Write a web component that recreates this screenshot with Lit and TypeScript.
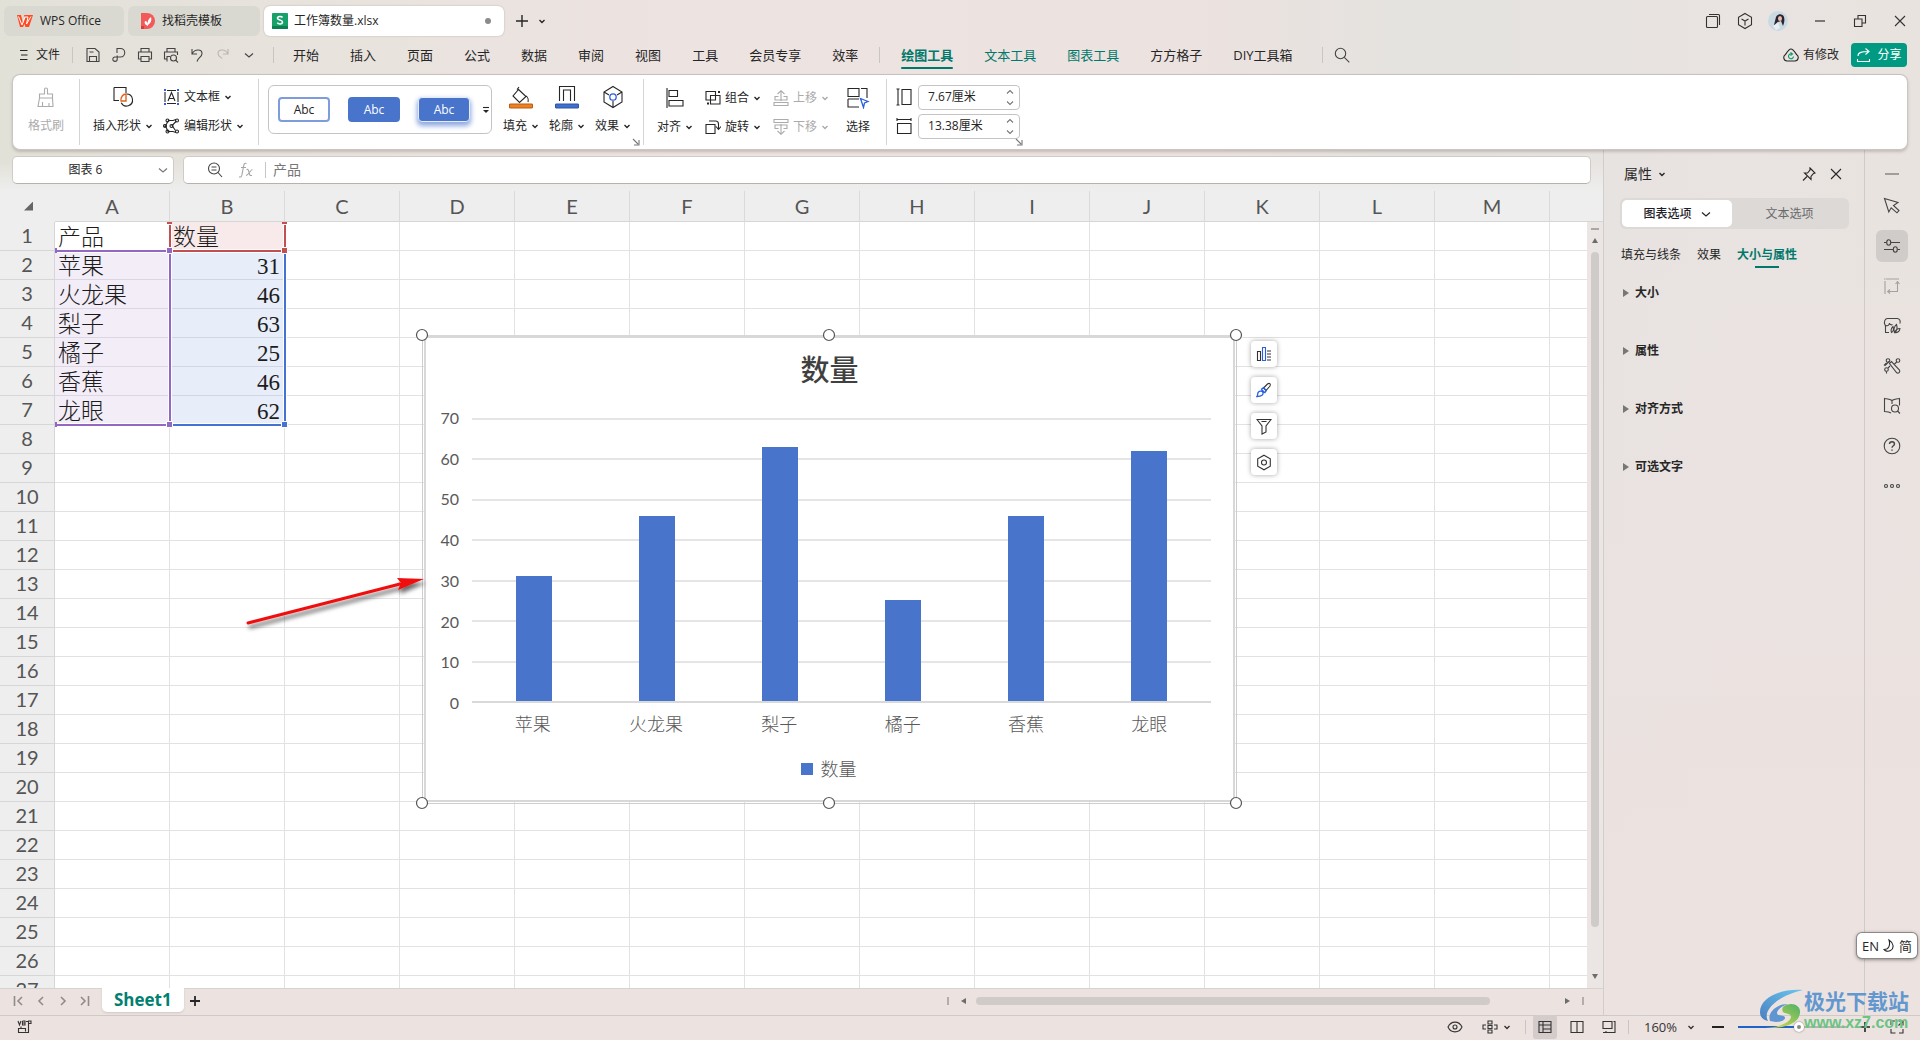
import { LitElement, html, css, svg, nothing, TemplateResult } from "lit";
import { customElement, property } from "lit/decorators.js";
import { classMap } from "lit/directives/class-map.js";
import { styleMap } from "lit/directives/style-map.js";

type Glyph = [number, number, TemplateResult];

const ICONS: Record<string, Glyph> = {
  wps: [18, 14, svg`<path d="M1 1h4l2 8 2-5-1-3h9l-4 12H9.500L8.500 10l-1.500 3H4z" fill="#ff4a24" stroke="none"/><path d="M2.500 2.500L6 11l3-8h3l-1.500 7L15 2.500" stroke="#fff" stroke-width="1"/>`],
  docer: [16, 16, svg`<path d="M1 0h6a8 8 0 0 1 0 16H1z" fill="#f25a5a" stroke="none"/><path d="M1 13h3v3H1z" fill="#d93b3b" stroke="none"/><path d="M8 13c-3-1-4-3-3-5 2 0 3 2 3 5zM8 12c-1-3 0-6 3-8 1 3 0 6-3 8z" fill="#fff" stroke="none"/>`],
  sheet: [16, 16, svg`<rect width="16" height="16" rx="1" fill="#16a06a" stroke="none"/><path d="M0 13h16v2a1 1 0 0 1-1 1H1a1 1 0 0 1-1-1z" fill="#0b7f50" stroke="none"/><path d="M10.500 4.500C9.500 3 5.500 3 5.500 5.300c0 2.200 5 1.400 5 3.800 0 2.400-4.200 2.300-5.200.6" stroke="#fff" stroke-width="1.600"/>`],
  plus: [14, 14, svg`<path d="M7 1v12M1 7h12" stroke-width="1.400"/>`],
  caret: [8, 8, svg`<path d="M1.500 3L4 5.500 6.500 3" stroke-width="1.400"/>`],
  chev: [10, 10, svg`<path d="M1 3.500l4 3.500 4-3.500"/>`],
  chevUp: [8, 6, svg`<path d="M1 4.500l3-3 3 3"/>`],
  chevDown: [8, 6, svg`<path d="M1 1.500l3 3 3-3"/>`],
  burger: [10, 12, svg`<path d="M1 1.500h7.500M2 6h6.500M1 10.500h7.500"/>`],
  save: [16, 16, svg`<path d="M2 1.500h8L14 5v9.500H2zM4.500 14.500v-5h7v5M4.500 5h4"/>`],
  pdf: [16, 16, svg`<path d="M6 6V1.500h3.500a4 4 0 0 1 0 8.500H4a2.200 2.200 0 1 0 2.200 2.200V8.500"/>`],
  print: [16, 16, svg`<path d="M4 5V1.500h8V5M3.500 12H1.500V5h13v7h-2M4 9.500h8v5H4z"/>`],
  preview: [16, 16, svg`<path d="M4 5V1.500h8V5M3.500 12H1.500V5h13v3M4 14.500V9.500h3"/><circle cx="10.500" cy="11" r="3"/><path d="M12.700 13.200L15 15.500"/>`],
  undo: [14, 16, svg`<path d="M2 2v5h5M2.300 6.500C5 1.500 12 2 12 6.500c0 3.500-4 4-5 8"/>`],
  redo: [14, 16, svg`<path d="M12 2v5H7M11.700 6.500C9 1.500 2 2 2 6.500c0 3 3 3.500 4 5"/>`],
  search: [16, 16, svg`<circle cx="6.500" cy="6.500" r="5.200"/><path d="M10.300 10.300l5 5"/>`],
  cloud: [16, 14, svg`<path d="M4 13a3.500 3.500 0 0 1-1.500-6.500C3.500 5 6 1 8 1s4.500 4 5.500 5.500A3.500 3.500 0 0 1 12 13z"/><path d="M7.500 4.500l2 1.500-2 1.500M9 6a2.500 2.500 0 1 0 1.500 2.500" stroke="#0a9a6c"/>`],
  share: [16, 16, svg`<path d="M2 9C2 5 6 4.500 12 4.500M9.500 1.500l3.500 3-3.500 3M1.500 12v2.500h12V12"/>`],
  pages: [16, 16, svg`<rect x="1.500" y="3.500" width="11" height="11" rx="1"/><path d="M4 1.500h9.500a1 1 0 0 1 1 1V12"/>`],
  cube: [16, 18, svg`<path d="M8 1.500l6.500 3.700v7.600L8 16.500l-6.500-3.700V5.200zM4.500 7L8 9l3.500-2M8 9v4.500"/>`],
  min: [12, 12, svg`<path d="M1 6h10" stroke-width="1.200"/>`],
  restore: [14, 14, svg`<path d="M1.500 5h7.500v7.500H1.500zM5 5V1.500h7.500V9H9"/>`],
  close: [12, 12, svg`<path d="M1 1l10 10M11 1L1 11"/>`],
  painter: [22, 22, svg`<path d="M9.500 8V3.500a1.500 1.500 0 0 1 3 0V8h5v4h-13V8zM4.500 12L3 20.500h15l-.5-8.500M7.500 20v-4M14 20v-3"/>`],
  shapes: [22, 22, svg`<path d="M2 1.500h12V7M7 14.500H2v-13"/><path d="M14.500 8a6 6 0 1 1-5.300 8.800"/><path d="M9 15c-.5-4 2-7 5-7v7z" stroke="#e0631d" stroke-width="1.400"/>`],
  textbox: [17, 16, svg`<path d="M2 3v10M15 3v10M4 1.500h9M4 14.500h9"/><path d="M5 12l3.500-8.500L12 12M6.300 9.500h4.500"/><g fill="#2b5fe0" stroke="none"><path d="M1 0h2v2H1zM14 0h2v2h-2zM1 14h2v2H1zM14 14h2v2h-2z"/></g>`],
  editshape: [17, 16, svg`<path d="M5 2.500h5l3-1M5 3L2.500 8 5 13.500h5l3 1M13.500 3L9 7.500l3.500 5M3.500 9L1 8"/><circle cx="14" cy="2.500" r="1.500"/><circle cx="4.500" cy="2.500" r="1.500"/><circle cx="2" cy="8" r="1.500"/><circle cx="8.500" cy="8" r="1.500"/><circle cx="4.500" cy="13.500" r="1.500"/><circle cx="14" cy="13.500" r="1.500"/>`],
  more: [8, 8, svg`<path d="M1 1.500h6"/><path d="M1 4h6L4 7z" fill="currentColor" stroke="none"/>`],
  fill: [24, 24, svg`<path d="M10 2l-2 2.500M9 4l8 7.500-6.500 6L4 11l5.500-6.500M17 11c2 1 2.500 4 2 6"/><rect x="0.500" y="19" width="23" height="4" rx="1" fill="#ee8023" stroke="#b85f12"/>`],
  outline: [24, 24, svg`<path d="M4.500 16V1.500h15V16M8.500 16V5h7v11"/><rect x="0.500" y="19" width="23" height="4" rx="1" fill="#3f6fce" stroke="#2c54a4"/>`],
  effect: [22, 24, svg`<path d="M11 1.500l9 5.500v10l-9 5.500L2 17V7zM2 7l5 3M20 7l-5 3M11 22v-6"/><circle cx="11" cy="12" r="3.200" stroke="#2b5fe0" stroke-width="1.300"/>`],
  corner: [8, 8, svg`<path d="M1 1l5 5M7 2v5H2"/>`],
  align: [20, 20, svg`<path d="M2 0v20M4 2.500h8.500v6H4zM4 12.500h14v5.500H4z"/>`],
  group: [16, 16, svg`<path d="M1 1.500h9.500V10H1zM5.500 5.500H15V14H5.500z"/><path d="M14 1v2M2 13.500h2" stroke-width="2"/>`],
  rotate: [16, 16, svg`<path d="M1 5.500h9v9H1zM4 2h6.500c2 0 3 1 3 3v5M11 7.500l2.500 3 2.500-3"/>`],
  up: [16, 16, svg`<path d="M8 11V1M4.500 4L8 .7 11.500 4M5.500 6.500H2v3.500h12V6.500h-3.500M1 12.500h14v3H1z"/>`],
  down: [16, 16, svg`<path d="M8 5v10M4.500 12L8 15.300 11.500 12M5.500 9.500H2V6h12v3.500h-3.500M1 .5h14v3H1z"/>`],
  select: [24, 22, svg`<path d="M2 1.500h11v8H2zM15 1.500h6V11M2 12v8h11M2 12h11"/><path d="M14.500 11.500l7.500 3-3.500 1.500-1 4.500z" stroke="#2b5fe0" stroke-width="1.300"/>`],
  height: [16, 18, svg`<path d="M2 1v16M.5 1h3M.5 17h3M6 1.500h9v15H6z"/>`],
  width: [16, 18, svg`<path d="M1 2.500h14M1 1v3M15 1v3M1.500 6.500h13.500v10H1.500z"/>`],
  zoomout: [16, 16, svg`<circle cx="7" cy="6.500" r="5.500"/><path d="M11 10.500l4 4.500M4.500 5h5M4.500 8h5"/>`],
  fx: [16, 16, svg`<path d="M8.500 1.500C6.500.5 6 2 5.500 4.500l-1.500 8C3.700 14.500 3 15.500 1 14.800M3 5.500h5M8.500 7.500c2-.8 2 1 2.800 4 .5 2 1 2.500 2.700 1.700M14.500 7.500c-2 0-3.500 5.500-6.500 6"/>`],
  pin: [14, 14, svg`<path d="M8 1l5 5-1.500.5-2.500 3v3L2.500 6h3L8 3zM5 9.500L1 13.500"/>`],
  elements: [16, 16, svg`<path d="M1.500 5.500h3v9h-3z"/><path d="M6.500 1.500h3v13h-3z" stroke="#2b5fe0"/><path d="M11 5h4M11 8h4M11 11h4M11 14h4"/>`],
  brush: [16, 16, svg`<path d="M7.500 6l4-4c2-1.500 3.500 0 2.500 2L10 8.500z"/><path d="M5 7.500l2.500-1.800L10.300 8.500 8.500 11M1 14.500c1-1 0-3 1.500-4.500s3.500-1 4.500.5c.5 2-1 4-6 4zM5.500 7.500l3 3" stroke="#2b5fe0" stroke-width="1.300"/>`],
  funnel: [16, 17, svg`<path d="M1 1.500h14L10 8v6l-4 2V8zM5.500 3.500h5"/>`],
  gear: [16, 17, svg`<path d="M8 1.200l6.300 3.600v7.400L8 15.800l-6.300-3.600V4.800z"/><circle cx="8" cy="8.500" r="2.500"/>`],
  dash: [14, 4, svg`<path d="M0 2h14" stroke="#8f8b89" stroke-width="1.600"/>`],
  cursor: [18, 18, svg`<path d="M1.500 1.500L15 5.500l-4.500 3 5.500 5-2 2.300-5.800-5L5.800 15z"/>`],
  sliders: [18, 16, svg`<path d="M1 4.500h2.500M8 4.500h9M1 11.500h9M14.500 11.500H17"/><ellipse cx="5.700" cy="4.500" rx="2" ry="2.700"/><ellipse cx="12.300" cy="11.500" rx="2" ry="2.700"/>`],
  transpose: [18, 18, svg`<path d="M3 2h13M2 4v13M1 2h1.500M14.500 5v9.500H5M12.500 7l2-2.300 2 2.300M7 12.500l-2.300 2L7 16.500"/>`],
  store: [18, 18, svg`<path d="M2.500 8.500v7H6M2 8C.5 5 2 1.500 4.500 1.500h10C17 2 17.500 4 17 6.500M2 8c2 1.500 4.500.5 4.500-2 0 1.500 1.500 2.300 3 1.500"/><path d="M8.500 15.500c-1-2 0-5 1.500-6 .8 2.500.5 5-1.500 6zM11.500 15.500c-1-3 0-6.500 2-8 1 3 .5 6.500-2 8zM11.500 15.500c1-2.500 3-4 5.500-4-.3 2.800-2.500 4.500-5.500 4z"/>`],
  tools: [18, 18, svg`<path d="M6.500 6.500l2-2 8 8.500c1 2-1 3.800-2.800 2.800zM6 4.500l-4 4"/><circle cx="5" cy="3.500" r="1.800"/><circle cx="15" cy="3.500" r="1.800"/><circle cx="3.500" cy="12.500" r="1.800"/><path d="M11.500 7L13.700 5M5 11l2-2M3.500 14.500v2M1 8.500L3.500 6"/>`],
  book: [18, 18, svg`<path d="M9 3.500C7 2 4 2 1.500 1.500v13c3 .2 5 .5 6.500 1.500M9 3.500c2-1.500 5-1.500 7.500-2v7M9 3.500V7"/><circle cx="12" cy="11.500" r="3.500"/><path d="M14.500 14l2.500 2.500"/>`],
  help: [18, 18, svg`<circle cx="9" cy="9" r="7.800"/><path d="M6.500 7c0-3 5-3 5 0 0 1.800-2.500 1.700-2.500 3.800M9 12.500v1.300" stroke-width="1.400"/>`],
  dots: [18, 6, svg`<circle cx="3" cy="3" r="1.500"/><circle cx="9" cy="3" r="1.500"/><circle cx="15" cy="3" r="1.500"/>`],
  first: [12, 10, svg`<path d="M1.500 0v10M9 1L5 5l4 4" stroke-width="1.600"/>`],
  prev: [12, 10, svg`<path d="M8 1L4 5l4 4" stroke-width="1.600"/>`],
  next: [12, 10, svg`<path d="M4 1l4 4-4 4" stroke-width="1.600"/>`],
  last: [12, 10, svg`<path d="M2 1l4 4-4 4M9.500 0v10" stroke-width="1.600"/>`],
  vbt: [16, 14, svg`<path d="M1 1l1.500 4L4 1M5.500 1v4H8V3H5.500M5.500 1H8v2M9 1.500h2M11.500 5V1H14v2.500h-2M11.500 3v9.500H1.500v-4h7v3M4 8V6.500"/>`],
  eye: [16, 12, svg`<path d="M1 6c3-6.500 11-6.500 14 0-3 6.500-11 6.500-14 0z"/><circle cx="8" cy="6" r="2"/>`],
  cross: [16, 14, svg`<path d="M6 1h4v3H6zM6 10h4v3H6zM4 5H1v4h3M12 5h3v4h-3M6 5.500h4v3H6z"/>`],
  normal: [14, 14, svg`<path d="M1 1.500h12v11H1zM1 5h12M5 1.500v11M5 9h8"/>`],
  layout: [14, 14, svg`<path d="M1 1.500h12v11H1zM7 1.500v11"/>`],
  pagebreak: [14, 14, svg`<path d="M1 1.500h9v7H1zM1 12.500h12v-11h-1.500M4 12V11"/>`],
  full: [14, 14, svg`<path d="M1 5V1h4M9 13h4V9M8.500 1H13v4.500M13 1L8.500 5.500M1 9v4h4.500"/>`],
  moon: [12, 14, svg`<path d="M6 1c4 2.500 6 8 1.500 10.500C5 13 2 12 1 10.500 6 10.500 7.500 6 6 1z"/>`],
};

@customElement("x-icon")
export class XIcon extends LitElement {
  static styles = css`
    :host { display: inline-flex; flex: none; }
    svg { display: block; fill: none; stroke: currentColor; stroke-width: 1.100; }
  `;
  @property() name = "";
  render() {
    const g = ICONS[this.name];
    if (!g) return nothing;
    return html`<svg width=${g[0]} height=${g[1]} viewBox="0 0 ${g[0]} ${g[1]}" aria-hidden="true">${g[2]}</svg>`;
  }
}

const ic = (name: string) => html`<x-icon name=${name}></x-icon>`;

const DATA: [string, number][] = [
  ["苹果", 31], ["火龙果", 46], ["梨子", 63], ["橘子", 25], ["香蕉", 46], ["龙眼", 62],
];

@customElement("column-chart")
export class ColumnChart extends LitElement {
  static styles = css`
    :host {
      display: flex; flex-direction: column; box-sizing: border-box; background: #fff;
      border: 2px solid #d8d8d8; border-top-width: 3px; padding: 12px 22px 0 12px;
      font-family: Lato, "Noto Sans CJK SC", sans-serif; color: #595959;
    }
    .title { margin: 0 0 0 10px; font-size: 29px; line-height: 40px; font-weight: 500; text-align: center; color: #404040; }
    .body { display: flex; margin-top: 28px; height: 285px; }
    .axis { display: flex; flex-direction: column; justify-content: space-between; width: 21px; margin: -10px 13px -10px 0; text-align: right; font-size: 16px; line-height: 20px; }
    .plot { flex: 1; display: grid; }
    .lines, .bars { grid-area: 1 / 1; display: flex; }
    .lines { flex-direction: column; justify-content: space-between; }
    .line { height: 2px; background: #e5e5e5; }
    .line:last-child { background: #d9d9d9; }
    .bars { align-items: flex-end; padding: 1px 0 2px; }
    .slot { flex: 1; height: 100%; display: flex; align-items: flex-end; justify-content: center; }
    .bar { width: 36px; background: #4874cb; }
    .cats { display: flex; margin: 7px 0 0 33px; font-size: 18px; line-height: 28px; font-weight: 300; }
    .cats span { flex: 1; text-align: center; }
    .legend { display: flex; justify-content: center; align-items: center; gap: 8px; margin-top: 17px; padding-left: 8px; font-size: 18px; line-height: 28px; font-weight: 300; }
    .key { width: 12px; height: 12px; background: #4874cb; }
  `;
  render() {
    const ticks = [70, 60, 50, 40, 30, 20, 10, 0];
    return html`
      <h2 class="title">数量</h2>
      <div class="body">
        <div class="axis">${ticks.map((t) => html`<span>${t}</span>`)}</div>
        <div class="plot">
          <div class="lines">${ticks.map(() => html`<div class="line"></div>`)}</div>
          <div class="bars">
            ${DATA.map(([, v]) => html`<div class="slot"><div class="bar" style=${styleMap({ height: `${(v / 70) * 100}%` })}></div></div>`)}
          </div>
        </div>
      </div>
      <div class="cats">${DATA.map(([n]) => html`<span>${n}</span>`)}</div>
      <div class="legend"><span class="key"></span><span>数量</span></div>
    `;
  }
}

@customElement("sheet-grid")
export class SheetGrid extends LitElement {
  static styles = css`
    :host { display: block; position: relative; overflow: hidden; flex: 1; min-width: 0; background: #fff; }
    table { border-collapse: separate; border-spacing: 0; table-layout: fixed; width: 1665px; }
    th, td { box-sizing: border-box; padding: 0; overflow: hidden; white-space: nowrap; }
    thead th { height: 31px; border-right: 1px solid #dadada; border-bottom: 1px solid #d6d6d6; background: #eeeeee; }
    thead th.stub, tbody th { width: 55px; }
    thead th.stub { border-right-color: #eeeeee; border-bottom-color: #eeeeee; }
    thead th { font: 400 20px/28px Lato, "Noto Sans", sans-serif; color: #555; }
    tbody th { padding-bottom: 3px; font: 400 20px/24px Lato, "Noto Sans", sans-serif; color: #555; border-right: 1px solid #d6d6d6; border-bottom: 1px solid #d6d6d6; background: #eeeeee; }
    thead th.col { width: 115px; }
    td { height: 29px; border-right: 1px solid #e2e2e2; border-bottom: 1px solid #e2e2e2; font: 300 23px/24px "Liberation Serif", "Noto Sans CJK SC", serif; color: #1c1c1c; vertical-align: bottom; }
    td.txt { padding-left: 3px; }
    td.num { padding-right: 4px; text-align: right; }
    .purple { background: #f3edf8; border-color: #dbd6e2; }
    .red { background: #f8eaea; }
    .blue { background: #e8edfa; border-color: #d1d6e4; }
    .tri { display: block; width: 9px; height: 9px; margin-left: 24px; background: #666; clip-path: polygon(100% 0, 100% 100%, 0 100%); }
    .marks { position: absolute; left: 0; top: 0; pointer-events: none; }
    column-chart { position: absolute; left: 424px; top: 144px; width: 811px; height: 467px; }
    .frame { position: absolute; left: 422px; top: 144px; width: 813px; height: 467px; border: 1px solid #cdcdd2; }
    .tools { position: absolute; left: 1251px; top: 150px; display: flex; flex-direction: column; gap: 10px; }
    .tools button { display: flex; align-items: center; justify-content: center; width: 26px; height: 26px; padding: 0; border: 0; border-radius: 4px; background: #fff; color: #333; box-shadow: 0 0 5px rgba(0, 0, 0, 0.35); }
  `;
  private cell(r: number, c: number) {
    if (r === 1 && c === 0) return html`<td class="txt">产品</td>`;
    if (r === 1 && c === 1) return html`<td class="txt red">数量</td>`;
    if (r >= 2 && r <= 7 && c === 0) return html`<td class="txt purple">${DATA[r - 2][0]}</td>`;
    if (r >= 2 && r <= 7 && c === 1) return html`<td class="num blue">${DATA[r - 2][1]}</td>`;
    return html`<td></td>`;
  }
  render() {
    const cols = [..."ABCDEFGHIJKLM", ""];
    const rows = Array.from({ length: 27 }, (_, i) => i + 1);
    const knobs = [[422, 144], [829, 144], [1236, 144], [422, 612], [829, 612], [1236, 612]];
    return html`
      <table aria-label="Sheet1">
        <thead><tr><th class="stub"><span class="tri"></span></th>${cols.map((c) => html`<th class="col" scope="col">${c}</th>`)}</tr></thead>
        <tbody>${rows.map((r) => html`<tr><th scope="row">${r}</th>${cols.map((_, c) => this.cell(r, c))}</tr>`)}</tbody>
      </table>
      <div class="frame"></div>
      <column-chart></column-chart>
      <svg class="marks" width="1587" height="799" viewBox="0 0 1587 799" fill="none">
        <defs><filter id="sh" x="-10%" y="-30%" width="120%" height="180%"><feDropShadow dx="2" dy="4" stdDeviation="2" flood-color="#000" flood-opacity="0.600"/></filter></defs>
        <g stroke="#fff" stroke-width="4"><path d="M55 60H285M170 60V234M285 60V234M55 234H285M170 31V60M285 31V60"/></g>
        <path d="M171 234H285V60" stroke="#4672d2" stroke-width="2"/>
        <path d="M55 60H170V234H55" stroke="#9368c2" stroke-width="2"/>
        <path d="M170 34V60M285 34V60M172 60H285" stroke="#c44f50" stroke-width="2"/>
        <path d="M167 32h5M282 32h5" stroke="#c44f50" stroke-width="2"/>
        <g stroke="#fff">
          <path d="M166.500 56.500h6v6h-6zM166.500 230.500h6v6h-6z" fill="#9368c2"/>
          <path d="M281.500 56.500h6v6h-6z" fill="#c44f50"/><path d="M281.500 230.500h6v6h-6z" fill="#4672d2"/>
        </g>
        <path d="M55 57h2v5h-2zM55 231h2v5h-2z" fill="#9368c2"/>
        <g fill="#fff" stroke="#555" stroke-width="1.200">${knobs.map(([x, y]) => svg`<circle cx=${x} cy=${y} r="5.500"/>`)}</g>
        <g filter="url(#sh)"><path d="M248 432L400 393" stroke="#f00d0d" stroke-width="3" stroke-linecap="round"/><path d="M397 387L424 388L398 399L401 392z" fill="#f00d0d"/></g>
      </svg>
      <div class="tools">
        ${[["elements", "图表元素"], ["brush", "图表样式"], ["funnel", "图表筛选器"], ["gear", "设置图表区域格式"]].map(([n, t]) => html`<button aria-label=${t}>${ic(n)}</button>`)}
      </div>
    `;
  }
}

@customElement("app-root")
export class AppRoot extends LitElement {
  static styles = css`
    :host {
      display: flex; flex-direction: column; height: 100vh; position: relative; overflow: hidden; color: #262626;
      font: 400 12px/18px "Open Sans", "Noto Sans CJK SC", sans-serif;
      background: linear-gradient(180deg, rgba(236, 227, 225, 0) 20%, #ece2e0 90%), linear-gradient(90deg, #e2e1d8 0, #e9e3de 20%, #ede3e1 36%, #ece2e0 62%, #e4e3df 74%, #e9e3e1 90%, #e9e3e0 100%);
    }
    button, input { font: inherit; color: inherit; border: 0; background: none; margin: 0; padding: 0; }
    button { display: flex; align-items: center; white-space: nowrap; }
    .vsep { width: 1px; background: #c9c5c2; flex: none; }
    .grow { flex: 1; }

    .title { display: flex; align-items: center; height: 30px; padding: 6px 0 0 4px; flex: none; }
    .tab { height: 30px; box-sizing: border-box; border-radius: 6px; background: #dad9d1; padding-left: 12px; gap: 6px; margin-right: 4px; }
    .t1 { width: 120px; }
    .t2 { width: 132px; }
    .t3 { width: 240px; background: #fff; padding: 0 13px 0 8px; box-shadow: 0 0 2px #b5b0ac; margin-right: 11px; }
    .dot { width: 6px; height: 6px; border-radius: 3px; background: #8b8b8b; }
    .title .caret { margin-left: 9px; }
    .sys { display: flex; align-items: center; height: 26px; color: #333; }
    .sys button { justify-content: center; width: 32px; }
    .sys .w { width: 40px; }
    .avatar { width: 20px; height: 20px; margin: 0 12px 0 7px; }

    .menu { display: flex; align-items: center; height: 38px; padding: 0 13px 0 19px; flex: none; font-size: 13px; }
    .file { gap: 7px; font-size: 12px; margin-right: 12px; }
    .menu .vsep { height: 16px; }
    .quick { display: flex; margin: 0 11px 0 7px; color: #444; }
    .quick button { width: 26px; height: 22px; justify-content: center; }
    .quick .off { color: #b9b6b2; }
    .tabs { display: flex; gap: 31px; margin: 0 21px 0 19px; }
    .tabs.more { margin: 0 29px 0 21px; }
    .tabs button { height: 27px; position: relative; }
    .ctx { color: #00796b; }
    .on { font-weight: 700; color: #00796b; }
    .tabs .on::after { content: ""; position: absolute; left: 0; right: 0; bottom: 0; height: 2px; background: #00796b; border-radius: 1px; }
    .menu .find { margin-left: 11px; color: #444; }
    .mod { gap: 4px; font-size: 12px; margin-right: 12px; }
    .share { gap: 5px; width: 56px; height: 24px; justify-content: center; border-radius: 4px; background: #009a82; color: #fff; font-size: 12px; }

    .ribbon { display: flex; align-items: stretch; margin: 0 12px; height: 74px; border: 1px solid #cbc6c3; border-top-color: #c6c1be; border-radius: 8px; background: #fff; flex: none; box-shadow: 0 2px 3px rgba(90, 70, 60, 0.25); z-index: 1; }
    .grp { display: flex; align-items: center; position: relative; border-right: 1px solid #d5d5d5; margin: 4px 0; padding-bottom: 2px; }
    .grp:last-child { border-right: 0; }
    .big { display: grid; grid-template-rows: 29px 28px; justify-items: center; align-items: center; }
    .lab { display: flex; align-items: center; gap: 4px; }
    .pair { display: grid; grid-template-rows: 29px 28px; }
    .pair > button { gap: 4px; }
    .off { color: #ababab; }
    .g1 { width: 66px; justify-content: center; }
    .g2 { padding-left: 13px; gap: 10px; width: 165px; }
    .g3 { padding-left: 9px; width: 375px; gap: 10px; }
    .g4 { padding: 0 16px 0 13px; gap: 12px; }
    .g4 .sel { margin-left: 5px; }
    .g5 { padding-left: 9px; width: 130px; }
    .gallery { display: flex; align-items: center; box-sizing: border-box; width: 224px; height: 49px; padding-left: 9px; gap: 18px; border: 1px solid #c4c4c4; border-radius: 6px; margin: 0 1px 3px 0; }
    .sw { width: 52px; height: 25px; box-sizing: border-box; justify-content: center; border-radius: 4px; color: #fff; background: #4874cb; }
    .sw.line { background: #fff; color: #222; border: 2px solid #7e9cdc; }
    .sw.glow { box-shadow: 0 3px 5px 1px #8fa9e0; border: 1px solid #e4ebf9; }
    .gallery .caret { margin-left: -6px; }
    .corner { position: absolute; right: 3px; bottom: -1px; color: #777; }
    .size { display: flex; align-items: center; gap: 6px; height: 29px; }
    .spin { display: flex; align-items: center; box-sizing: border-box; width: 102px; height: 25px; border: 1px solid #c4c4c4; border-radius: 4px; padding: 0 5px 0 9px; }
    .spin input { width: 72px; flex: 1; }
    .ud { display: flex; flex-direction: column; gap: 5px; color: #777; }

    .main { display: flex; flex: 1; min-height: 0; }
    .work { display: flex; flex-direction: column; flex: 1; min-width: 0; }
    .fbar { display: flex; gap: 9px; padding: 6px 12px 7px; height: 28px; flex: none; background: linear-gradient(180deg, rgba(238, 238, 238, 0) 30%, #eeeeee); }
    .box { display: flex; align-items: center; box-sizing: border-box; height: 28px; background: #fff; border: 1px solid #cfcbc8; border-bottom-color: #b5b2b0; border-radius: 5px; }
    .name { width: 162px; padding-right: 5px; }
    .name button { color: #777; }
    .name input { width: 142px; text-align: center; flex: 1; }
    .formula { flex: 1; padding-left: 23px; gap: 15px; color: #444; }
    .formula .fxi { color: #a5a5a5; }
    .formula .vsep { height: 16px; margin: 0 -8px 0 -4px; }
    .formula input { flex: 1; color: #777; font-size: 14px; }
    .sheet { display: flex; flex: 1; min-height: 0; border-bottom: 1px solid #d6d2d0; }
    .vscroll { display: flex; flex-direction: column; align-items: center; width: 16px; background: #ebe6e4; flex: none; }
    .vhead { align-self: stretch; height: 30px; background: #eeeeee; border-bottom: 1px solid #d6d6d6; margin-bottom: 6px; }
    .vdash { width: 8px; height: 2px; background: #aaa7a5; }
    .a { width: 0; height: 0; border: 3px solid transparent; }
    .a.up { border-bottom: 5px solid #6c6c6c; border-top: 0; margin: 8px 0 9px; }
    .a.dn { border-top: 5px solid #6c6c6c; border-bottom: 0; margin: 0 0 9px; }
    .a.lf { border-right: 5px solid #6c6c6c; border-left: 0; margin: 0 10px 0 12px; }
    .a.rt { border-left: 5px solid #6c6c6c; border-right: 0; margin-right: 12px; }
    .vthumb { width: 8px; flex: 1; border-radius: 4px; background: #cfcbc9; margin-bottom: 47px; }
    .sbar { display: flex; align-items: center; height: 24px; flex: none; padding: 0 19px 2px 13px; }
    .nav { display: flex; gap: 10px; color: #908c8a; }
    .active { align-self: flex-start; height: 24px; margin: -1px 0 0 11px; padding: 0 12px; font: 700 17px/24px "Open Sans", sans-serif; color: #008070; background: #fff; border-radius: 0 0 5px 5px; box-shadow: 0 1px 2px #cfc8c5; }
    .add { margin-left: 6px; }
    .tick { width: 2px; height: 8px; background: #b3aeac; }
    .htrack { width: 589px; display: flex; }
    .hthumb { width: 514px; height: 8px; border-radius: 4px; background: #d0cbc9; }

    .panel { width: 260px; border-left: 1px solid #d1cdcb; flex: none; }
    .phead { display: flex; align-items: center; padding: 14px 22px 0 20px; height: 20px; font-size: 14px; }
    .phead button:first-child { gap: 6px; }
    .phead .x { margin-left: 14px; }
    .seg { display: flex; margin: 14px 15px 0 16px; height: 27px; padding: 2px; border-radius: 6px; background: #dcd9d7; }
    .seg button { flex: 1; justify-content: center; color: #6a6a6a; border-radius: 5px; }
    .seg .act { flex: none; width: 110px; gap: 9px; background: #fff; color: #1f1f2a; font-weight: 500; }
    .ptabs { display: flex; gap: 16px; margin: 14px 0 0 17px; height: 26px; }
    .ptabs button { height: 24px; }
    .ptabs .on { position: relative; }
    .ptabs .on::after { content: ""; position: absolute; left: 18px; right: 18px; bottom: -1px; height: 2px; background: #00796b; }
    .acc { display: flex; flex-direction: column; gap: 38px; margin: 14px 0 0 19px; align-items: flex-start; }
    .acc button { height: 20px; gap: 6px; font-weight: 700; }
    .acc button::before { content: ""; border: 4px solid transparent; border-left: 6px solid #777; border-right: 0; }

    .rail { display: flex; flex-direction: column; align-items: center; width: 54px; border-left: 1px solid #cfcbc8; flex: none; padding: 15px 1px 0 0; color: #444; }
    .rail button { width: 32px; height: 32px; justify-content: center; margin-bottom: 8px; border-radius: 6px; }
    .rail button:first-child { height: 17px; }
    .rail .sel { background: #d0ccca; }
    .rail .off { color: #a5a1a0; }

    .status { display: flex; align-items: center; height: 22px; border-top: 1px solid #cfcac8; padding: 0 16px 2px 17px; flex: none; color: #333; }
    .status .vsep { height: 14px; }
    .read { margin: 0 14px 0 19px; gap: 5px; }
    .views { display: flex; gap: 8px; margin: 0 7px; }
    .views button { width: 24px; height: 24px; justify-content: center; border-radius: 3px; }
    .views .sel { background: #d3ccca; }
    .pct { gap: 10px; font-size: 13px; margin-left: 15px; width: 52px; }
    .mn { margin-left: 16px; }
    .status input { width: 110px; height: 12px; margin: 0 12px 0 14px; appearance: none; -webkit-appearance: none; background: transparent; }
    .status input::-webkit-slider-runnable-track { height: 2px; background: linear-gradient(90deg, #1f62c8 56%, #b9b3b1 56%); }
    .status input::-webkit-slider-thumb { -webkit-appearance: none; width: 10px; height: 10px; margin-top: -4px; border-radius: 5px; background: #888; border: 3px solid #fff; box-sizing: border-box; box-shadow: 0 0 2px #777; }
    .fs { margin-left: 20px; }
    .ime { position: absolute; right: 3px; bottom: 82px; display: flex; align-items: center; justify-content: center; gap: 4px; width: 60px; height: 25px; border-radius: 5px; background: #fff; box-shadow: 0 0 0 1px #8c8886, 0 1px 4px rgba(0, 0, 0, 0.6); font-size: 13px; }
    .mark { position: absolute; right: 11px; bottom: 7px; display: flex; align-items: center; pointer-events: none; }
    .mark svg { margin-right: 1px; }
    .mark div { display: flex; flex-direction: column; }
    .cn { font: 700 21px/26px "Noto Sans CJK SC", sans-serif; color: #6298cf; }
    .en { font: 700 16px/20px "Liberation Sans", sans-serif; color: #6cc484; }
  `;

  private drop(t: string) {
    return html`<span class="lab">${t}${ic("caret")}</span>`;
  }

  render() {
    const left = ["开始", "插入", "页面", "公式", "数据", "审阅", "视图", "工具", "会员专享", "效率"];
    const right = ["绘图工具", "文本工具", "图表工具", "方方格子", "DIY工具箱"];
    const quick: [string, string][] = [["save", "保存"], ["pdf", "输出为PDF"], ["print", "打印"], ["preview", "打印预览"], ["undo", "撤销"], ["redo", "恢复"], ["chev", "更多"]];
    const rail: [string, string][] = [["dash", "收起"], ["cursor", "选择"], ["sliders", "属性"], ["transpose", "行列"], ["store", "素材"], ["tools", "工具"], ["book", "查找"], ["help", "帮助"], ["dots", "更多"]];
    return html`
      <header class="title">
        <button class="tab t1">${ic("wps")}<span>WPS Office</span></button>
        <button class="tab t2">${ic("docer")}<span>找稻壳模板</span></button>
        <button class="tab t3">${ic("sheet")}<span>工作簿数量.xlsx</span><span class="grow"></span><span class="dot"></span></button>
        <button aria-label="新建">${ic("plus")}</button>
        <button class="caret" aria-label="标签列表">${ic("caret")}</button>
        <span class="grow"></span>
        <div class="sys">
          <button aria-label="窗口">${ic("pages")}</button>
          <button aria-label="应用">${ic("cube")}</button>
          <svg class="avatar" viewBox="0 0 20 20"><circle cx="10" cy="10" r="10" fill="#c9dae3"/><path d="M8 6c2-4 7-3 8 0 1 4 0 6-1 9l-2-5-3 1-2 3H6z" fill="#2c2430"/><ellipse cx="12" cy="7.500" rx="2" ry="2.600" fill="#e8bfae"/><path d="M5 15l5-4 2 6-4 2z" fill="#e9eef2"/></svg>
          <button class="w" aria-label="最小化">${ic("min")}</button>
          <button class="w" aria-label="还原">${ic("restore")}</button>
          <button class="w" aria-label="关闭">${ic("close")}</button>
        </div>
      </header>
      <nav class="menu">
        <button class="file">${ic("burger")}文件</button>
        <span class="vsep"></span>
        <div class="quick">${quick.map(([n, t]) => html`<button class=${classMap({ off: n === "redo" })} aria-label=${t}>${ic(n)}</button>`)}</div>
        <span class="vsep"></span>
        <div class="tabs">${left.map((t) => html`<button>${t}</button>`)}</div>
        <span class="vsep"></span>
        <div class="tabs more">${right.map((t, i) => html`<button class=${classMap({ on: i === 0, ctx: i === 1 || i === 2 })}>${t}</button>`)}</div>
        <span class="vsep"></span>
        <button class="find" aria-label="搜索">${ic("search")}</button>
        <span class="grow"></span>
        <button class="mod">${ic("cloud")}有修改</button>
        <button class="share">${ic("share")}分享</button>
      </nav>
      <section class="ribbon">
        <div class="grp g1"><button class="big off">${ic("painter")}<span>格式刷</span></button></div>
        <div class="grp g2">
          <button class="big">${ic("shapes")}${this.drop("插入形状")}</button>
          <div class="pair">
            <button>${ic("textbox")}${this.drop("文本框")}</button>
            <button>${ic("editshape")}${this.drop("编辑形状")}</button>
          </div>
        </div>
        <div class="grp g3">
          <div class="gallery">
            <button class="sw line">Abc</button><button class="sw">Abc</button><button class="sw glow">Abc</button>
            <button class="caret" aria-label="更多样式">${ic("more")}</button>
          </div>
          <button class="big">${ic("fill")}${this.drop("填充")}</button>
          <button class="big">${ic("outline")}${this.drop("轮廓")}</button>
          <button class="big">${ic("effect")}${this.drop("效果")}</button>
          <button class="corner" aria-label="设置形状格式">${ic("corner")}</button>
        </div>
        <div class="grp g4">
          <button class="big">${ic("align")}${this.drop("对齐")}</button>
          <div class="pair"><button>${ic("group")}${this.drop("组合")}</button><button>${ic("rotate")}${this.drop("旋转")}</button></div>
          <div class="pair"><button class="off">${ic("up")}${this.drop("上移")}</button><button class="off">${ic("down")}${this.drop("下移")}</button></div>
          <button class="big sel">${ic("select")}<span>选择</span></button>
        </div>
        <div class="grp g5">
          <div class="pair">
            ${[["height", "7.67厘米", "高度"], ["width", "13.38厘米", "宽度"]].map(([n, v, l]) => html`
              <label class="size">${ic(n)}<span class="spin"><input aria-label=${l} .value=${v}><span class="ud">${ic("chevUp")}${ic("chevDown")}</span></span></label>`)}
          </div>
          <button class="corner" aria-label="大小设置">${ic("corner")}</button>
        </div>
      </section>
      <div class="main">
        <div class="work">
          <div class="fbar">
            <div class="box name"><input aria-label="名称框" .value=${"图表 6"}><button aria-label="名称列表">${ic("chev")}</button></div>
            <div class="box formula">
              <button aria-label="缩小">${ic("zoomout")}</button>
              <button class="fxi" aria-label="插入函数">${ic("fx")}</button>
              <span class="vsep"></span>
              <input aria-label="编辑栏" .value=${"产品"}>
            </div>
          </div>
          <div class="sheet">
            <sheet-grid></sheet-grid>
            <div class="vscroll"><div class="vhead"></div><span class="vdash"></span><span class="a up"></span><span class="vthumb"></span><span class="a dn"></span></div>
          </div>
          <div class="sbar">
            <div class="nav">
              <button aria-label="第一张">${ic("first")}</button><button aria-label="上一张">${ic("prev")}</button>
              <button aria-label="下一张">${ic("next")}</button><button aria-label="最后一张">${ic("last")}</button>
            </div>
            <button class="active">Sheet1</button>
            <button class="add" aria-label="新建工作表"><svg width="10" height="10" viewBox="0 0 10 10"><path d="M5 0v10M0 5h10" stroke="#262626" stroke-width="1.800"/></svg></button>
            <span class="grow"></span>
            <span class="tick"></span><span class="a lf"></span>
            <div class="htrack"><span class="hthumb"></span></div>
            <span class="a rt"></span><span class="tick"></span>
          </div>
        </div>
        <aside class="panel">
          <div class="phead"><button>属性${ic("caret")}</button><span class="grow"></span><button aria-label="固定">${ic("pin")}</button><button class="x" aria-label="关闭面板">${ic("close")}</button></div>
          <div class="seg"><button class="act">图表选项${ic("chev")}</button><button>文本选项</button></div>
          <div class="ptabs"><button>填充与线条</button><button>效果</button><button class="on">大小与属性</button></div>
          <div class="acc">${["大小", "属性", "对齐方式", "可选文字"].map((t) => html`<button aria-expanded="false">${t}</button>`)}</div>
        </aside>
        <div class="rail">${rail.map(([n, t]) => html`<button class=${classMap({ sel: n === "sliders", off: n === "transpose" })} aria-label=${t}>${ic(n)}</button>`)}</div>
      </div>
      <footer class="status">
        ${ic("vbt")}<span class="grow"></span>
        <button aria-label="护眼">${ic("eye")}</button>
        <button class="read" aria-label="阅读模式">${ic("cross")}${ic("caret")}</button>
        <span class="vsep"></span>
        <div class="views">
          <button class="sel" aria-label="普通视图">${ic("normal")}</button>
          <button aria-label="页面布局">${ic("layout")}</button>
          <button aria-label="分页预览">${ic("pagebreak")}</button>
        </div>
        <span class="vsep"></span>
        <button class="pct">160%${ic("caret")}</button>
        <button class="mn" aria-label="缩小"><svg width="12" height="12" viewBox="0 0 12 12"><path d="M0 6h12" stroke="#222" stroke-width="2"/></svg></button>
        <input type="range" min="0" max="100" .value=${"56"} aria-label="缩放">
        <button aria-label="放大"><svg width="10" height="10" viewBox="0 0 10 10"><path d="M5 0v10M0 5h10" stroke="#222" stroke-width="1.600"/></svg></button>
        <button class="fs" aria-label="全屏">${ic("full")}</button>
      </footer>
      <div class="ime"><span>EN</span>${ic("moon")}<span>简</span></div>
      <div class="mark">
        <svg width="44" height="42" viewBox="0 0 44 42">
          <defs>
            <linearGradient id="b" x1="0" y1="1" x2="1" y2="0"><stop offset="0" stop-color="#4a7fc0"/><stop offset="1" stop-color="#6cc6ee"/></linearGradient>
            <linearGradient id="g" x1="0" y1="1" x2="1" y2="0"><stop offset="0" stop-color="#e8e040"/><stop offset="1" stop-color="#4fb06a"/></linearGradient>
          </defs>
          <path d="M44 1C24-1 1 8 1 23c0 5 3 8 8 9C3 22 18 7 44 1z" fill="url(#b)"/>
          <path d="M11 32c-3-8 6-17 18-17-6 2-11 6-11 9 0 4 8 1 8 5 0 2-4 4-9 4z" fill="#5f95d0"/>
          <path d="M24 18c8-6 18-2 17 6-1 10-15 16-35 15 14-1 25-5 26-11 0-4-6-3-8-5-1-2-1-3 0-5z" fill="url(#g)"/>
        </svg>
        <div><span class="cn">极光下载站</span><span class="en">www.xz7.com</span></div>
      </div>
    `;
  }
}
